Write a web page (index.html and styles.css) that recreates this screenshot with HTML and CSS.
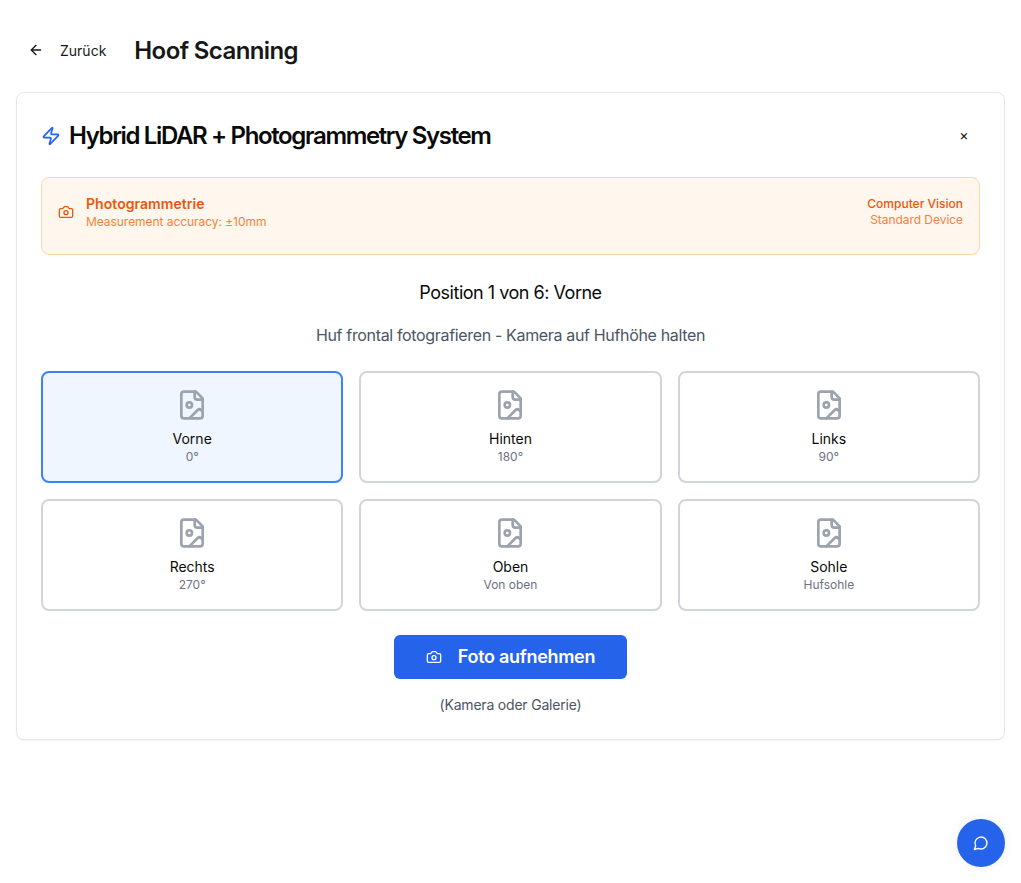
FILE: index.html
```html
<!DOCTYPE html>
<html lang="de">
<head>
<meta charset="utf-8">
<title>Hoof Scanning</title>
<link rel="stylesheet" href="styles.css">
</head>
<body>
<svg class="defs" width="0" height="0" aria-hidden="true">
  <symbol id="i-cam" viewBox="0 0 24 24"><path d="M14.5 4h-5L7 7H4a2 2 0 0 0-2 2v9a2 2 0 0 0 2 2h16a2 2 0 0 0 2-2V9a2 2 0 0 0-2-2h-3l-2.5-3z"/><circle cx="12" cy="13" r="3"/></symbol>
  <symbol id="i-file" viewBox="0 0 24 24"><path d="M15 2H6a2 2 0 0 0-2 2v16a2 2 0 0 0 2 2h12a2 2 0 0 0 2-2V7Z"/><path d="M14 2v4a2 2 0 0 0 2 2h4"/><circle cx="10" cy="12" r="2"/><path d="m20 17-1.09-1.09a2 2 0 0 0-2.82 0L10 22"/></symbol>
</svg>
<main class="page">
  <header class="top">
    <a class="back">
      <svg class="ic ic16" viewBox="0 0 24 24"><path d="m12 19-7-7 7-7"/><path d="M19 12H5"/></svg>
      <span>Zurück</span>
    </a>
    <h1>Hoof Scanning</h1>
  </header>
  <section class="card">
    <div class="card-head">
      <h2><svg class="ic ic20 blue" viewBox="0 0 24 24"><path d="M4 14a1 1 0 0 1-.78-1.63l9.9-10.2a.5.5 0 0 1 .86.46l-1.92 6.02A1 1 0 0 0 13 10h7a1 1 0 0 1 .78 1.63l-9.9 10.2a.5.5 0 0 1-.86-.46l1.92-6.02A1 1 0 0 0 11 14z"/></svg><span>Hybrid LiDAR + Photogrammetry System</span></h2>
      <button class="close">×</button>
    </div>
    <div class="mode">
      <div class="mode-left">
        <svg class="ic ic16"><use href="#i-cam"/></svg>
        <div>
          <div class="mode-title">Photogrammetrie</div>
          <div class="mode-sub">Measurement accuracy: ±10mm</div>
        </div>
      </div>
      <div class="mode-right">
        <div class="mode-r1">Computer Vision</div>
        <div class="mode-sub">Standard Device</div>
      </div>
    </div>
    <p class="pos">Position 1 von 6: Vorne</p>
    <p class="hint">Huf frontal fotografieren - Kamera auf Hufhöhe halten</p>
    <div class="grid">
      <div class="tile active"><svg class="ic ic32"><use href="#i-file"/></svg><div class="name">Vorne</div><div class="sub">0°</div></div>
      <div class="tile"><svg class="ic ic32"><use href="#i-file"/></svg><div class="name">Hinten</div><div class="sub">180°</div></div>
      <div class="tile"><svg class="ic ic32"><use href="#i-file"/></svg><div class="name">Links</div><div class="sub">90°</div></div>
      <div class="tile"><svg class="ic ic32"><use href="#i-file"/></svg><div class="name">Rechts</div><div class="sub">270°</div></div>
      <div class="tile"><svg class="ic ic32"><use href="#i-file"/></svg><div class="name">Oben</div><div class="sub">Von oben</div></div>
      <div class="tile"><svg class="ic ic32"><use href="#i-file"/></svg><div class="name">Sohle</div><div class="sub">Hufsohle</div></div>
    </div>
    <div class="action">
      <button class="primary"><svg class="ic ic16"><use href="#i-cam"/></svg><span>Foto aufnehmen</span></button>
      <p class="note">(Kamera oder Galerie)</p>
    </div>
  </section>
</main>
<button class="chat"><svg class="ic ic16" viewBox="0 0 24 24"><path d="M7.9 20A9 9 0 1 0 4 16.1L2 22Z"/></svg></button>
</body>
</html>
```

FILE: styles.css
```css
* { box-sizing: border-box; }
html, body { margin: 0; padding: 0; }
body { background: #fff; color: #0a0a0a; font-family: Inter, "Liberation Sans", sans-serif; height: 883px; overflow: hidden; }
.defs { position: absolute; }
.page { padding: 30px 16px 0; }
.ic { fill: none; stroke: currentColor; stroke-width: 2; stroke-linecap: round; stroke-linejoin: round; flex: none; display: block; }
.ic16 { width: 16px; height: 16px; }
.ic20 { width: 20px; height: 20px; }
.ic32 { width: 32px; height: 32px; }
.blue { color: #2563eb; }
.top { display: flex; align-items: center; gap: 16px; height: 40px; margin-bottom: 22px; }
.back { display: flex; align-items: center; gap: 16px; height: 40px; padding: 0 12px; font-size: 14px; font-weight: 400; color: #171717; }
h1 { margin: 2px 0 0; font-size: 24px; line-height: 32px; font-weight: 600; letter-spacing: -0.6px; color: #171717; }
.card { border: 1px solid #e5e7eb; border-radius: 8px; background: #fff; box-shadow: 0 1px 2px rgba(0,0,0,.05); padding: 24px; height: 648px; }
.card-head { display: flex; justify-content: space-between; align-items: center; height: 38px; margin-bottom: 22px; }
h2 { margin: 0; display: flex; align-items: center; gap: 8px; font-size: 24px; line-height: 24px; font-weight: 600; letter-spacing: -1.36px; color: #0a0a0a; }
.close { align-self: flex-start; width: 40px; height: 34px; margin-right: -4px; border: 0; background: none; padding: 0; font: 400 14px Inter, sans-serif; color: #0a0a0a; }
.mode { display: flex; justify-content: space-between; align-items: center; height: 78px; padding: 16px 16px 24px; background: #fff7ed; border: 1px solid #fed7aa; border-radius: 8px; margin-bottom: 24px; }
.mode-left { display: flex; align-items: center; gap: 12px; color: #ea580c; }
.mode-title { font-size: 14px; line-height: 20px; font-weight: 600; letter-spacing: 0.05px; color: #ea580c; }
.mode-sub { font-size: 12px; line-height: 16px; letter-spacing: -0.05px; color: #f97f3c; }
.mode-right { text-align: right; }
.mode-r1 { font-size: 12px; line-height: 16px; font-weight: 500; color: #ea580c; }
.pos { margin: 0 0 16px; text-align: center; font-size: 18px; line-height: 28px; font-weight: 400; letter-spacing: -0.48px; color: #0a0a0a; }
.hint { margin: 0 0 24px; text-align: center; font-size: 16px; line-height: 24px; letter-spacing: -0.34px; color: #4b5563; }
.grid { display: grid; grid-template-columns: repeat(3, 1fr); gap: 16px; }
.tile { height: 112px; border: 2px solid #d1d5db; border-radius: 8px; padding: 16px; display: flex; flex-direction: column; align-items: center; color: #9ca3af; }
.tile.active { border-color: #3b82f6; background: #eff6ff; }
.name { margin-top: 8px; font-size: 14px; line-height: 20px; font-weight: 400; color: #0a0a0a; }
.sub { font-size: 12px; line-height: 16px; color: #6b7280; }
.action { display: flex; flex-direction: column; align-items: center; margin-top: 24px; }
.primary { display: flex; align-items: center; justify-content: center; gap: 16px; width: 233px; height: 44px; border: 0; border-radius: 6px; background: #2563eb; color: #fff; font: 600 18px/28px Inter, sans-serif; letter-spacing: -0.3px; }
.note { margin: 16px 0 0; font-size: 14px; line-height: 20px; letter-spacing: -0.2px; color: #4b5563; }
.chat { position: fixed; right: 16px; bottom: 16px; width: 48px; height: 48px; border: 0; border-radius: 50%; background: #2563eb; color: #fff; display: flex; align-items: center; justify-content: center; box-shadow: 0 0 12px rgba(0,0,0,.07); }
```
